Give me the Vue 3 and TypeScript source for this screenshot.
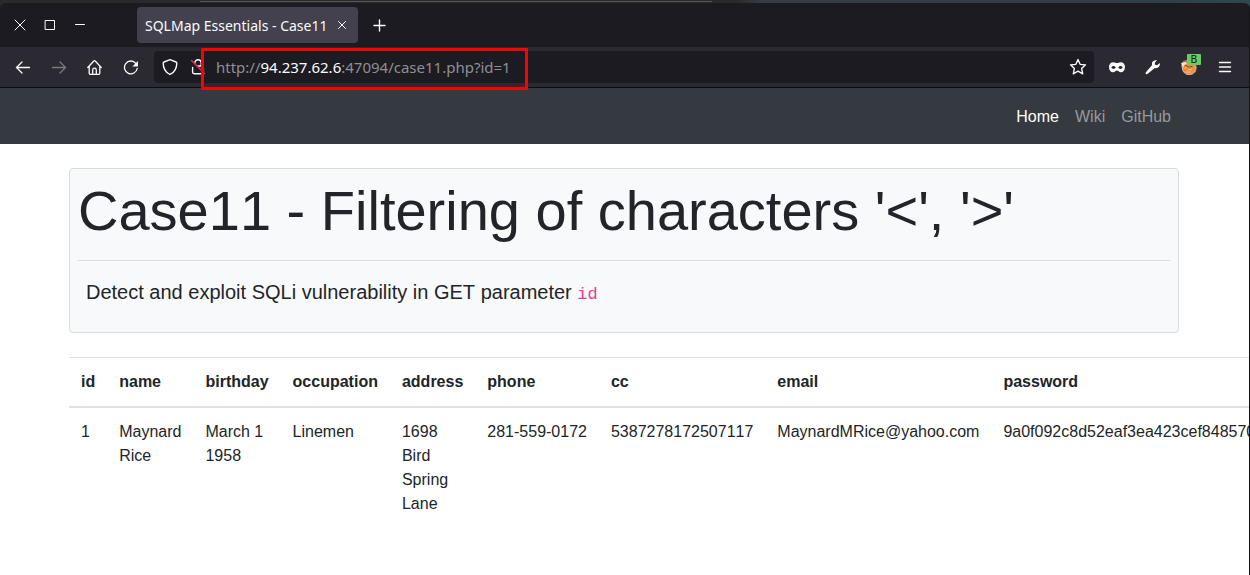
<script setup lang="ts">
import { ref } from 'vue'

interface Column {
  key: string
  value: string
  nowrap?: boolean
}

const scheme = 'http://'
const host = '94.237.62.6'
const path = ':47094/case11.php?id=1'
const address = ref(scheme + host + path)

const links = [
  { label: 'Home', active: true },
  { label: 'Wiki', active: false },
  { label: 'GitHub', active: false },
]

const columns: Column[] = [
  { key: 'id', value: '1' },
  { key: 'name', value: 'Maynard Rice' },
  { key: 'birthday', value: 'March 1 1958' },
  { key: 'occupation', value: 'Linemen' },
  { key: 'address', value: '1698 Bird Spring Lane' },
  { key: 'phone', value: '281-559-0172', nowrap: true },
  { key: 'cc', value: '5387278172507117' },
  { key: 'email', value: 'MaynardMRice@yahoo.com' },
  { key: 'password', value: '9a0f092c8d52eaf3ea423cef848570' },
]
</script>

<template>
  <div class="desktop">
    <div class="window">
      <div class="tabbar">
        <div class="controls">
          <button type="button" aria-label="Close window">
            <svg width="16" height="16" viewBox="0 0 16 16"><path d="M3 3l10 10M13 3L3 13" /></svg>
          </button>
          <button type="button" aria-label="Maximize window">
            <svg width="16" height="16" viewBox="0 0 16 16"><path d="M3.5 3.5h9v9h-9z" /></svg>
          </button>
          <button type="button" aria-label="Minimize window">
            <svg width="16" height="16" viewBox="0 0 16 16"><path d="M3.500 7.5h9" /></svg>
          </button>
        </div>
        <div class="tab">
          <span class="tab-title">SQLMap Essentials - Case11</span>
          <button type="button" class="tab-close" aria-label="Close tab">
            <svg width="16" height="16" viewBox="0 0 16 16"><path d="M4.500 4.500l7 7M11.500 4.500l-7 7" /></svg>
          </button>
        </div>
        <button type="button" class="new-tab" aria-label="New tab">
          <svg width="16" height="16" viewBox="0 0 16 16"><path d="M8.500 3v11M3 8.500h11" stroke-width="1.400" /></svg>
        </button>
      </div>

      <div class="toolbar">
        <button type="button" class="tool" aria-label="Back">
          <svg width="16" height="16" viewBox="0 0 16 16"><path d="M14.500 8.500H1.500M7 3L1.500 8.500 7 14" stroke-width="1.300" /></svg>
        </button>
        <button type="button" class="tool dim" aria-label="Forward">
          <svg width="16" height="16" viewBox="0 0 16 16"><path d="M1.500 8.500h13M9 3l5.500 5.500L9 14" stroke-width="1.300" /></svg>
        </button>
        <button type="button" class="tool" aria-label="Home">
          <svg width="16" height="16" viewBox="0 0 16 16"><path d="M.8 8.500L6.800 2a1 1 0 0 1 1.400 0l6 6.500M2.200 7.200v6.900a1.400 1.400 0 0 0 1.400 1.400h7.800a1.400 1.400 0 0 0 1.400-1.400V7.200M5.700 15.300V11a1.800 1.800 0 0 1 3.600 0v4.300" stroke-width="1.300" /></svg>
        </button>
        <button type="button" class="tool" aria-label="Reload">
          <svg width="16" height="16" viewBox="0 0 16 16"><path d="M12.800 4.300A6.400 6.400 0 1 0 14.200 9.500" stroke-width="1.300" /><path d="M15 2v5a.6.6 0 0 1-.6.6H9.400z" class="solid" /></svg>
        </button>

        <div class="urlbar">
          <button type="button" class="url-icon" aria-label="Tracking protection">
            <svg width="16" height="16" viewBox="0 0 16 16"><path d="M8 .7l6 2.300c.6.2.8.6.8 1.100 0 5-2 9-6.300 11.100a1 1 0 0 1-1 0C3.200 13.100 1.200 9.100 1.200 4.100c0-.5.2-.9.8-1.100z" stroke-width="1.400" /></svg>
          </button>
          <button type="button" class="url-icon" aria-label="Connection not secure">
            <svg width="16" height="16" viewBox="0 0 16 16"><path d="M4.800 4.500V4a3.200 3.200 0 0 1 6.400 0v3M2.600 8.500v4.600a1.700 1.700 0 0 0 1.700 1.700h7.400a1.700 1.700 0 0 0 1.700-1.700V8.700A1.700 1.700 0 0 0 11.700 7H8" stroke-width="1.400" /><path d="M1.500 1.500l13 13" class="slash" /></svg>
          </button>
          <div class="url-field">
            <div class="url-text" aria-hidden="true">
              {{ scheme }}<b>{{ host }}</b>{{ path }}
            </div>
            <input v-model="address" type="text" class="url-input" aria-label="Address" spellcheck="false" />
            <div class="highlight"></div>
          </div>
          <button type="button" class="url-icon" aria-label="Bookmark this page">
            <svg width="18" height="18" viewBox="0 0 16 16"><path d="M8 1.300l1.900 4.300 4.800.5-3.500 3.200 1 4.800L8 11.700l-4.200 2.400 1-4.800L1.300 6.100l4.800-.5z" stroke-width="1.200" stroke-linejoin="round" /></svg>
          </button>
        </div>

        <button type="button" class="tool" aria-label="Private mask">
          <svg width="16" height="16" viewBox="0 0 16 16"><path fill-rule="evenodd" class="solid" d="M0 8C0 5 1.800 3.300 4.300 3.300c1.700 0 2.700.8 3.700.8s2-.8 3.700-.8C14.200 3.300 16 5 16 8c0 3.200-1.700 5.300-4.100 5.300-1.900 0-2.700-1.700-3.900-1.700s-2 1.700-3.900 1.700C1.700 13.300 0 11.200 0 8zM2.300 8.600c.4.800 1.200 1.400 2.200 1.400s1.900-.6 2.200-1.400c-.3-.9-1.200-1.600-2.200-1.600s-1.800.7-2.200 1.600zm7 0c.3.800 1.200 1.400 2.200 1.400s1.800-.6 2.200-1.400c-.4-.9-1.200-1.600-2.200-1.600s-1.900.7-2.200 1.600z" /></svg>
        </button>
        <button type="button" class="tool" aria-label="Developer tools">
          <svg width="16" height="16" viewBox="0 0 16 16"><path class="solid" d="M14.700 4l-2.600 2.200-2-.5-.3-2L12 1.300C10 .7 7.600 1.800 7 3.800c-.2.800-.1 1.600.1 2.300L.9 13.200c-.6.700-.3 1.400.1 1.800s1.200.4 1.800-.2l6.900-5.900c1 .4 2 .3 3-.2 1.800-.9 2.600-3 2-4.700z" /></svg>
        </button>
        <button type="button" class="tool proxy" aria-label="Proxy: Burp">
          <svg width="18" height="18" viewBox="0 0 18 18">
            <path d="M3 3l6-2 6 3 2 5-1 5-4 3H7l-4-3-2-6z" fill="#ab6f49" stroke="none" />
            <circle cx="9" cy="10" r="6.500" fill="#f4892e" stroke="#c4c0ba" stroke-width="1" />
            <path d="M1 5l4-1 2 2-3 1-1 3z" fill="#e8e4df" stroke="none" />
            <path d="M5 10l2-1M8 12l4-1M6 14h5" stroke="#f7cf98" stroke-width=".8" />
            <path d="M5.500 7.500l3 1.500M10 9l2-.5" stroke="#40556b" />
          </svg>
          <span class="badge">B</span>
        </button>
        <button type="button" class="tool" aria-label="Application menu">
          <svg width="16" height="16" viewBox="0 0 16 16"><path d="M2.500 3.500h11M2.500 8h11M2.500 12.500h11" stroke-width="1.400" /></svg>
        </button>
      </div>

      <div class="page">
        <nav class="navbar">
          <div class="container nav-links">
            <a v-for="link in links" :key="link.label" href="#" :class="{ active: link.active }">{{ link.label }}</a>
          </div>
        </nav>
        <main class="container">
          <section class="card">
            <h1>Case11 - Filtering of characters '&lt;', '&gt;'</h1>
            <hr />
            <p>Detect and exploit SQLi vulnerability in GET parameter <code>id</code></p>
          </section>
          <table>
            <thead>
              <tr>
                <th v-for="column in columns" :key="column.key" scope="col">{{ column.key }}</th>
              </tr>
            </thead>
            <tbody>
              <tr>
                <td v-for="column in columns" :key="column.key" :class="{ nowrap: column.nowrap }">{{ column.value }}</td>
              </tr>
            </tbody>
          </table>
        </main>
      </div>
    </div>
  </div>
</template>

<style>
body {
  margin: 0;
}
</style>

<style scoped>
* {
  box-sizing: border-box;
}

/* The strip above the window shows the edge of another window behind it */
.desktop {
  display: flex;
  min-height: 100vh;
  padding-top: 3px;
  overflow: hidden;
  background:
    linear-gradient(90deg, transparent 16%, #565656 16%, #565656 57%, transparent 57%) 0 1px / 100% 1px no-repeat,
    linear-gradient(90deg, #292a2c 0%, #292a29 59%, #353b47 61%, #303c48 92%, #2c4a50 100%);
  font-family: "Liberation Sans", Arial, sans-serif;
}

.window {
  display: flex;
  flex: 1;
  flex-direction: column;
  min-width: 0;
  overflow: hidden;
  border-right: 1px solid #141418;
  border-radius: 6px 6px 0 0;
  background: #1c1b22;
}

button {
  display: flex;
  align-items: center;
  justify-content: center;
  padding: 0;
  border: 0;
  background: none;
  color: #fbfbfe;
}

svg {
  flex: none;
  fill: none;
  stroke: currentColor;
  stroke-linecap: round;
}

.solid {
  fill: currentColor;
  stroke: none;
}

.tabbar {
  display: flex;
  align-items: center;
  height: 44px;
  font-family: "Noto Sans", "Open Sans", sans-serif;
}

.controls {
  display: flex;
  padding: 0 42px 0 5px;
}

.controls button {
  width: 30px;
  height: 36px;
}

.tab {
  display: flex;
  align-items: center;
  gap: 7px;
  height: 36px;
  padding: 0 8px;
  border-radius: 4px;
  background: #42414d;
  color: #fbfbfe;
  font-size: 14px;
  white-space: nowrap;
}

.new-tab {
  width: 36px;
  height: 36px;
  margin-left: 3px;
}

.toolbar {
  display: flex;
  align-items: center;
  height: 41px;
  padding: 0 6px 0 5px;
  border-bottom: 1px solid #0c0c0d;
  background: #2b2a33;
}

.tool {
  flex: none;
  width: 36px;
  height: 32px;
}

.dim {
  color: #7b7a81;
}

.urlbar {
  display: flex;
  flex: 1;
  align-items: center;
  min-width: 0;
  height: 32px;
  margin: 0 5px;
  padding: 0 2px;
  border-radius: 4px;
  background: #1c1b22;
}

.url-icon {
  flex: none;
  width: 28px;
  height: 28px;
}

.slash {
  stroke: #e22850;
  stroke-width: 1.500;
}

.url-field {
  position: relative;
  display: grid;
  flex: 1;
  align-items: center;
  min-width: 0;
  padding-left: 4px;
  font-family: "Noto Sans", "Open Sans", sans-serif;
  font-size: 15px;
  line-height: 24px;
}

.url-text,
.url-input {
  grid-area: 1 / 1;
  min-width: 0;
  overflow: hidden;
  white-space: nowrap;
}

.url-text {
  color: #8f8f94;
}

.url-text b {
  color: #fbfbfe;
  font-weight: 400;
}

.url-input {
  width: 100%;
  padding: 0;
  border: 0;
  outline: 0;
  background: none;
  color: transparent;
  caret-color: #fbfbfe;
  font: inherit;
}

/* Frame laid over the address, spilling past the toolbar's edges */
.highlight {
  position: absolute;
  top: -7px;
  left: -11px;
  width: 327px;
  height: 42px;
  border: 3px solid #fe0000;
  pointer-events: none;
}

.proxy {
  position: relative;
}

.badge {
  position: absolute;
  top: 3px;
  right: 6px;
  width: 14px;
  height: 11px;
  border-radius: 1px;
  background: #66cc66;
  color: #10240f;
  font: 10px/11px "DejaVu Sans", sans-serif;
  text-align: center;
}

.page {
  flex: 1;
  overflow: hidden;
  background: #fff;
  color: #212529;
  font-size: 16px;
  font-kerning: none;
  line-height: 24px;
}

.container {
  width: calc(100% - 30px);
  max-width: 1111px;
  margin: 0 auto;
  padding-right: 1px;
}

.navbar {
  padding: 9px 0 7px;
  background: #343a40;
}

.nav-links {
  display: flex;
  justify-content: flex-end;
}

.nav-links a {
  padding: 8px;
  color: #98999b;
  text-decoration: none;
}

.nav-links a.active {
  color: #fff;
}

.card {
  margin: 24px 0;
  padding: 8px 8px 9px;
  border: 1px solid #d9dadc;
  border-radius: 4px;
  background: #f8f9fa;
}

h1 {
  margin: 0;
  font-size: 56px;
  font-weight: 400;
  line-height: 67px;
}

hr {
  margin: 16px 0;
  border: 0;
  border-top: 1px solid #dcdddf;
}

p {
  margin: 0 0 16px;
  padding: 0 8px;
  font-size: 20px;
  line-height: 30px;
}

code {
  color: #e83e8c;
  font-family: "Liberation Mono", monospace;
  font-size: 17px;
  line-height: 18px;
}

table {
  width: 100%;
  border-collapse: collapse;
}

th,
td {
  padding: 12px;
  border-top: 1px solid #dee2e6;
  text-align: left;
  vertical-align: top;
}

thead th {
  border-bottom: 2px solid #dee2e6;
}

.nowrap {
  white-space: nowrap;
}
</style>
